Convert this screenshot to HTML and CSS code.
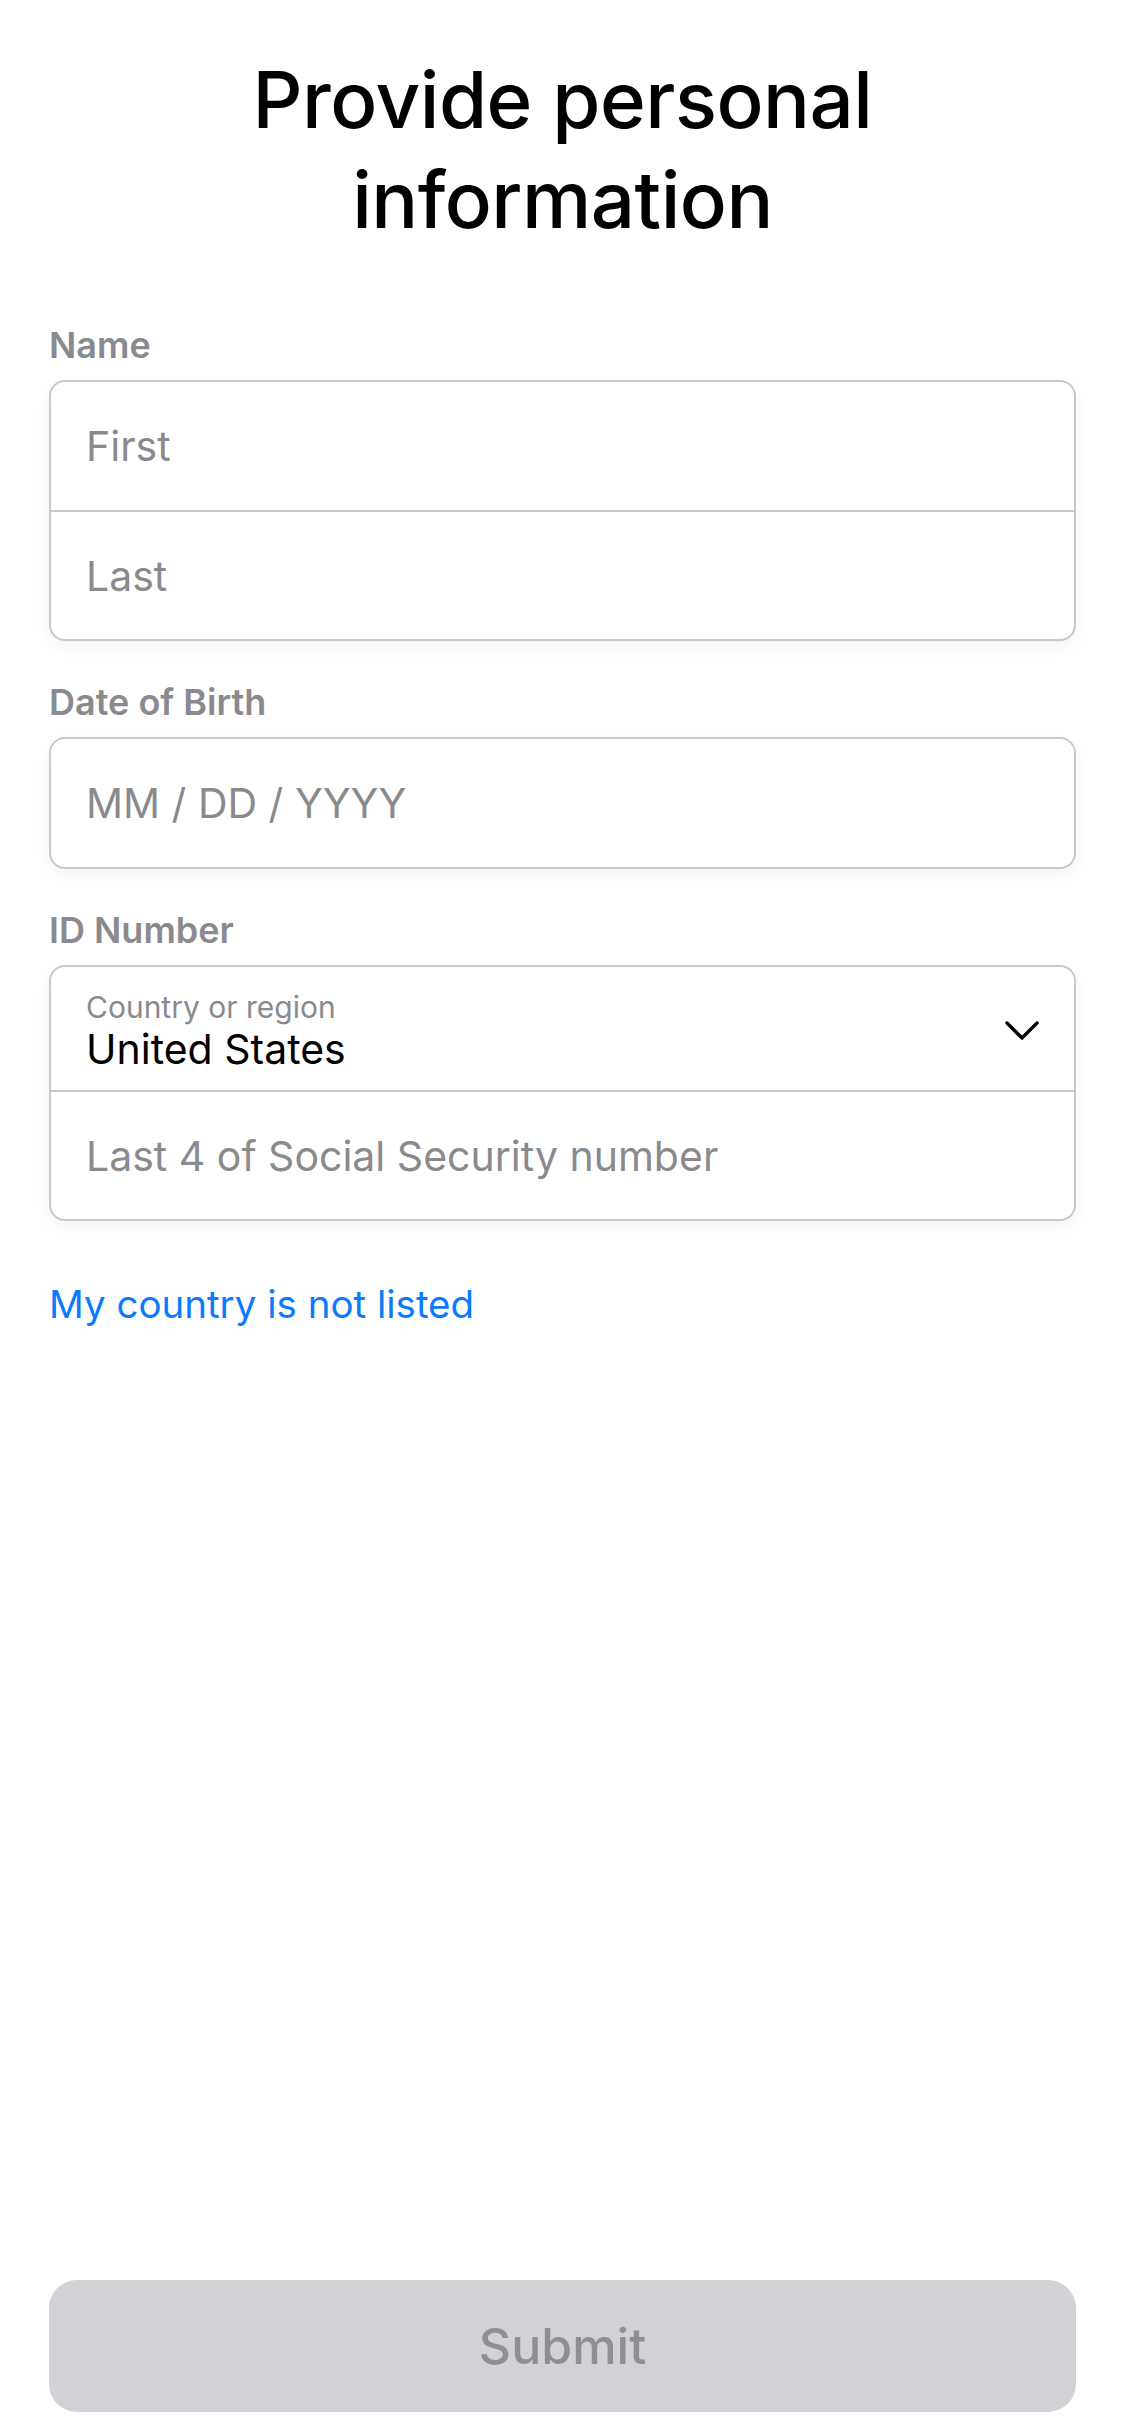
FILE: index.html
```html
<!DOCTYPE html>
<html lang="en">
<head>
<meta charset="utf-8">
<title>Provide personal information</title>
<link rel="stylesheet" href="styles.css">
</head>
<body>
<main class="page">
  <h1 class="title">Provide personal information</h1>

  <section class="group">
    <div class="label">Name</div>
    <div class="box">
      <div class="row"><span class="placeholder">First</span></div>
      <div class="row"><span class="placeholder">Last</span></div>
    </div>
  </section>

  <section class="group">
    <div class="label">Date of Birth</div>
    <div class="box">
      <div class="row"><span class="placeholder">MM / DD / YYYY</span></div>
    </div>
  </section>

  <section class="group">
    <div class="label">ID Number</div>
    <div class="box">
      <div class="row row-select">
        <div class="select-text">
          <span class="select-caption">Country or region</span>
          <span class="select-value">United States</span>
        </div>
        <svg class="chevron" width="34" height="20" viewBox="0 0 34 20" aria-hidden="true">
          <path d="M2 2 L17 17 L32 2" fill="none" stroke="#000" stroke-width="3.4" stroke-linecap="round" stroke-linejoin="round"/>
        </svg>
      </div>
      <div class="row"><span class="placeholder">Last 4 of Social Security number</span></div>
    </div>
  </section>

  <a class="link" href="#">My country is not listed</a>

  <button class="submit" type="button">Submit</button>
</main>
</body>
</html>
```

FILE: styles.css
```css
* {
  box-sizing: border-box;
}

html, body {
  margin: 0;
  padding: 0;
  background: #ffffff;
}

body {
  font-family: Inter, "Noto Sans", "Liberation Sans", sans-serif;
  color: #000;
}

.page {
  width: 1125px;
  height: 2436px;
  padding: 0 49px 24px;
  display: flex;
  flex-direction: column;
}

.title {
  margin: 50px 0 0;
  font-size: 78px;
  line-height: 100px;
  font-weight: 500;
  text-align: center;
  letter-spacing: -0.5px;
  padding: 0 150px;
}

.group {
  display: flex;
  flex-direction: column;
}

.label {
  font-size: 36px;
  line-height: 44px;
  font-weight: 600;
  color: #8a8a8e;
  margin-top: 39px;
  margin-bottom: 13px;
}

.group:first-of-type .label {
  margin-top: 73px;
}

.box {
  border: 2px solid #c8c8cc;
  border-radius: 16px;
  background: #fff;
  box-shadow: 0 6px 20px rgba(0, 0, 0, 0.05);
  overflow: hidden;
}

.row {
  height: 128px;
  display: flex;
  align-items: center;
  padding: 0 35px;
}

.row + .row {
  border-top: 2px solid #c8c8cc;
  height: 129px;
}

.placeholder {
  font-size: 41px;
  color: #8a8a8e;
}

.row-select {
  height: 123px;
  justify-content: space-between;
  padding-right: 35px;
}

.select-text {
  display: flex;
  flex-direction: column;
  padding-top: 4px;
}

.select-caption {
  font-size: 30px;
  line-height: 36px;
  color: #8a8a8e;
}

.select-value {
  font-size: 41px;
  line-height: 48px;
  color: #000;
}

.chevron {
  display: block;
  margin-top: 4px;
}

.link {
  margin-top: 58px;
  font-size: 38.5px;
  line-height: 50px;
  color: #0a7aff;
  text-decoration: none;
  align-self: flex-start;
}

.submit {
  margin-top: auto;
  height: 132px;
  width: 100%;
  border: none;
  border-radius: 28px;
  background: #d1d1d6;
  color: #8e8e93;
  font-family: inherit;
  font-size: 50px;
  font-weight: 500;
}
```
